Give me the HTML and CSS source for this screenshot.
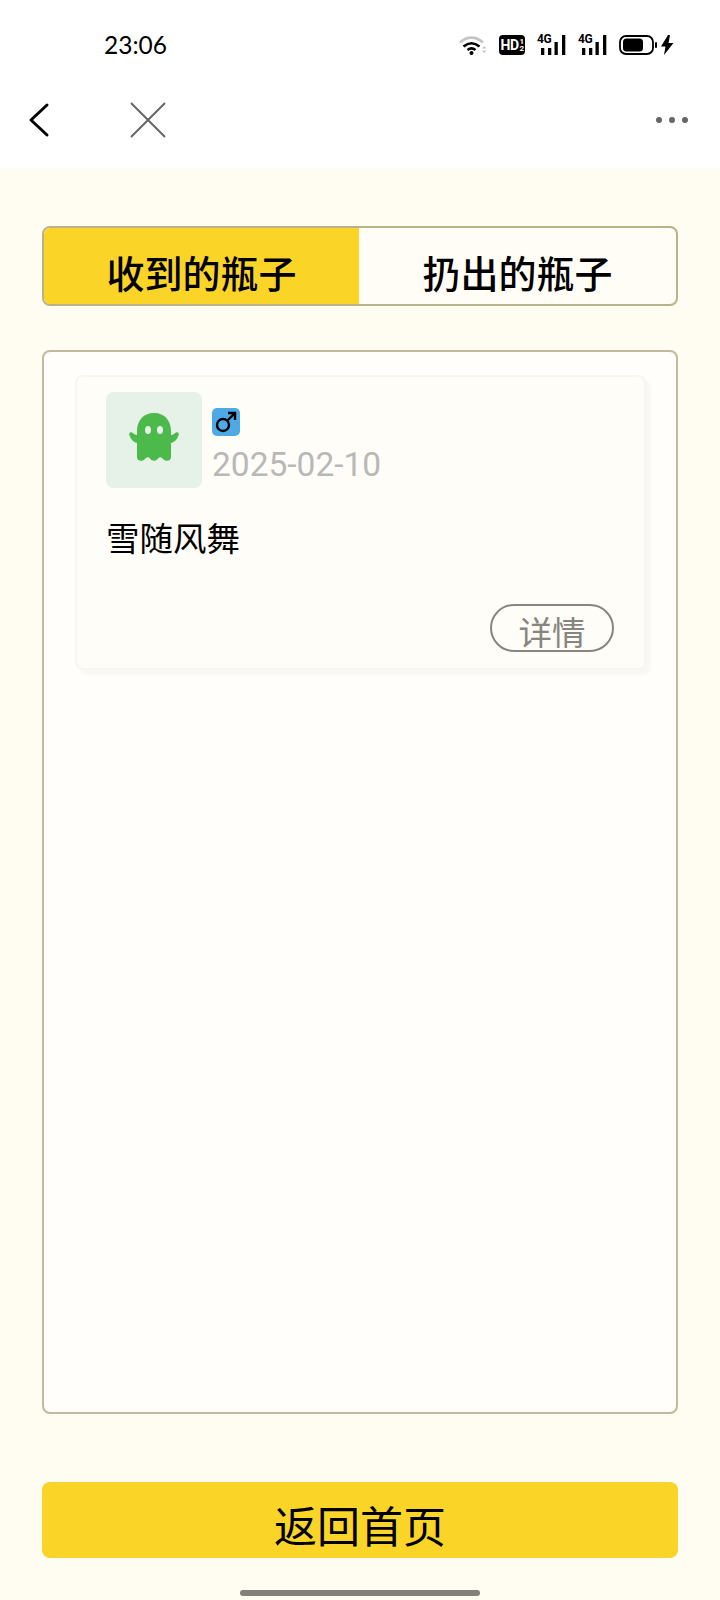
FILE: index.html
```html
<!DOCTYPE html>
<html lang="zh-CN">
<head>
  <meta charset="UTF-8">
  <meta name="viewport" content="width=device-width, initial-scale=1.0">
  <title>我的瓶子</title>
  <link rel="stylesheet" href="styles.css">
</head>
<body>
  <!-- 状态栏 -->
  <div class="status-bar">
    <span class="time">23:06</span>
    <div class="status-icons">
      <svg width="28" height="20" viewBox="0 0 28 20">
        <path d="M1 7.500C8 1 17 1 24 7.500" fill="none" stroke="#c4c4c4" stroke-width="2.600"/>
        <path d="M4.500 11.500C10 7 15 7 20.500 11.500" fill="none" stroke="#000" stroke-width="2.600"/>
        <path d="M8.500 15C11 13 14 13 16.500 15" fill="none" stroke="#000" stroke-width="2.600"/>
        <circle cx="12.500" cy="18" r="2" fill="#000"/>
        <path d="M23 13.500l2.200-2.400 2.200 2.400zM23 15.500l2.200 2.400 2.200-2.400z" fill="#c4c4c4"/>
      </svg>
      <span class="hd">HD<span class="hd-sub">1<br>2</span></span>
      <span class="signal">
        <span class="net">4G</span>
        <svg width="25" height="20" viewBox="0 0 25 20"><path d="M0 13h3.300v7H0zM7 13h3.300v7H7zM13.500 7h3.300v13h-3.300zM21 0h3.300v20H21z" fill="#000"/></svg>
      </span>
      <span class="signal">
        <span class="net">4G</span>
        <svg width="25" height="20" viewBox="0 0 25 20"><path d="M0 13h3.300v7H0zM7 13h3.300v7H7zM13.500 7h3.300v13h-3.300zM21 0h3.300v20H21z" fill="#000"/></svg>
      </span>
      <svg width="55" height="20" viewBox="0 0 55 20">
        <rect x="1" y="1" width="33" height="18" rx="6" fill="none" stroke="#000" stroke-width="1.800"/>
        <rect x="4" y="3.500" width="20" height="13" rx="3.500" fill="#000"/>
        <rect x="36" y="7" width="2" height="6" rx="1" fill="#000"/>
        <path d="M49 0L42 11.500h4.500L45 20 54.500 8h-5l1.500-8z" fill="#000"/>
      </svg>
    </div>
  </div>

  <!-- 导航栏 -->
  <div class="nav-bar">
    <svg class="nav-back" width="22" height="36" viewBox="0 0 22 36">
      <path d="M19 3L3 18L19 33" fill="none" stroke="#000" stroke-width="3" stroke-linecap="round" stroke-linejoin="round"/>
    </svg>
    <svg class="nav-close" width="38" height="38" viewBox="0 0 38 38">
      <path d="M2 2L36 36M36 2L2 36" fill="none" stroke="#666" stroke-width="2"/>
    </svg>
    <div class="nav-more"><i></i><i></i><i></i></div>
  </div>

  <div class="page">
    <div class="tabs">
      <div class="tab tab-active">收到的瓶子</div>
      <div class="tab">扔出的瓶子</div>
    </div>

    <div class="list-box">
      <div class="card">
        <div class="card-head">
          <div class="avatar">
            <svg width="50" height="49" viewBox="0 0 50 49">
              <path d="M25 0C14 0 8 8 8 18V22C6 22 4.500 20.500 3 19.500C1 18.500-.5 20.500.5 22.500C2 27 5 29.500 8 30V44C8 48 13 49 15.500 46.500C17.500 44 19.500 43.500 21 45.500C23 48.500 27 48.500 29 45.500C30.500 43.500 32.500 44 34.500 46.500C37 49 42 48 42 44V30C45 29.500 48 27 49.500 22.500C50.500 20.500 49 18.500 47 19.500C45.500 20.500 44 22 42 22V18C42 8 36 0 25 0Z" fill="#4cba4a"/>
              <ellipse cx="19" cy="17" rx="3" ry="4" fill="#e6f2e8"/>
              <ellipse cx="31" cy="17" rx="3" ry="4" fill="#e6f2e8"/>
            </svg>
          </div>
          <div class="meta">
            <span class="gender">
              <svg width="22" height="22" viewBox="0 0 22 22">
                <circle cx="8" cy="14" r="6" fill="none" stroke="#000" stroke-width="2.400"/>
                <path d="M12.500 9.500L20 2M13 2h7v7" fill="none" stroke="#000" stroke-width="2.400"/>
              </svg>
            </span>
            <span class="date">2025-02-10</span>
          </div>
        </div>
        <div class="name">雪随风舞</div>
        <div class="card-foot">
          <button class="detail-btn">详情</button>
        </div>
      </div>
    </div>

    <button class="home-btn">返回首页</button>
    <div class="home-bar"></div>
  </div>
</body>
</html>
```

FILE: styles.css
```css
* {
  box-sizing: border-box;
}
html, body {
  margin: 0;
  padding: 0;
}
body {
  width: 720px;
  height: 1600px;
  overflow: hidden;
  background: #fff;
  font-family: "Noto Sans CJK SC", Roboto, sans-serif;
  color: #000;
}
.status-bar {
  height: 80px;
  display: flex;
  align-items: center;
  justify-content: space-between;
  padding: 10px 46px 0 104px;
}
.time {
  margin-top: -2px;
  font-family: Lato, sans-serif;
  font-size: 24.500px;
}
.status-icons {
  display: flex;
  align-items: center;
  gap: 12px;
}
.status-icons > svg {
  display: block;
}
.hd {
  display: flex;
  align-items: center;
  justify-content: center;
  width: 26px;
  height: 20px;
  background: #000;
  border-radius: 4px;
  color: #fff;
  font-family: Roboto, sans-serif;
  font-size: 14px;
  font-weight: 700;
  letter-spacing: -0.6px;
}
.hd-sub {
  margin-left: 1px;
  font-size: 8px;
  line-height: 7px;
  text-align: center;
}
.signal {
  position: relative;
  display: flex;
  justify-content: flex-end;
  width: 29px;
  height: 20px;
}
.net {
  position: absolute;
  left: 0;
  top: -3px;
  font-family: Roboto, sans-serif;
  font-size: 12px;
  font-weight: 700;
  letter-spacing: -0.4px;
}
.nav-bar {
  height: 88px;
  display: flex;
  align-items: center;
  padding: 0 32px 8px 28px;
}
.nav-back {
  margin-right: 79px;
}
.nav-more {
  margin-left: auto;
  display: flex;
  gap: 6.500px;
}
.nav-more i {
  width: 6.500px;
  height: 6.500px;
  border-radius: 50%;
  background: #666;
}
.page {
  height: 1432px;
  background: #fffcf2;
  padding: 58px 42px 0;
}
.tabs {
  height: 80px;
  display: flex;
  border: 2px solid #b9b28a;
  border-radius: 8px;
  overflow: hidden;
  background: #fffdf6;
}
.tab {
  flex: 1;
  text-align: center;
  font-size: 38px;
  font-weight: 500;
  line-height: 56px;
  padding-top: 16px;
}
.tab-active {
  flex: none;
  width: 315px;
  background: #fbd428;
}
.list-box {
  height: 1064px;
  margin-top: 44px;
  padding: 23px 31px;
  border: 2px solid #bfb99f;
  border-radius: 8px;
  background: #fffefb;
}
.card {
  height: 295px;
  width: 571px;
  padding: 15px 30px 0 29px;
  background: #fffdf8;
  border: 2px solid #f7f6f2;
  border-radius: 8px;
  box-shadow: 5px 5px 2px #f9f8f5;
}
.card-head {
  display: flex;
  gap: 10px;
}
.avatar {
  width: 96px;
  height: 96px;
  padding-bottom: 5px;
  display: flex;
  align-items: center;
  justify-content: center;
  background: #e6f2e8;
  border-radius: 8px;
}
.meta {
  display: flex;
  flex-direction: column;
  align-items: flex-start;
  padding-top: 16px;
}
.gender {
  width: 28px;
  height: 28px;
  display: flex;
  align-items: center;
  justify-content: center;
  background: #4eaae6;
  border-radius: 5px;
}
.date {
  margin-top: 7px;
  font-family: Roboto, sans-serif;
  font-size: 33.500px;
  line-height: 44px;
  color: #b8b8b8;
}
.name {
  margin-top: 25px;
  font-size: 33.500px;
  font-weight: 400;
  line-height: 48px;
}
.card-foot {
  display: flex;
  justify-content: flex-end;
  margin-top: 43px;
}
.detail-btn {
  width: 124px;
  height: 48px;
  padding: 4px 0 0;
  border: 2px solid #888580;
  border-radius: 24px;
  background: transparent;
  color: #888580;
  font-family: inherit;
  font-size: 33.500px;
  font-weight: 400;
  line-height: 42px;
}
.home-btn {
  display: block;
  width: 636px;
  height: 76px;
  margin-top: 68px;
  padding: 8px 0 0;
  border: none;
  border-radius: 8px;
  background: #fbd428;
  color: #000;
  font-family: inherit;
  font-size: 43px;
  font-weight: 400;
  line-height: 60px;
}
.home-bar {
  width: 240px;
  height: 6px;
  margin: 32px auto 0;
  border-radius: 3px;
  background: #82807a;
}
```
